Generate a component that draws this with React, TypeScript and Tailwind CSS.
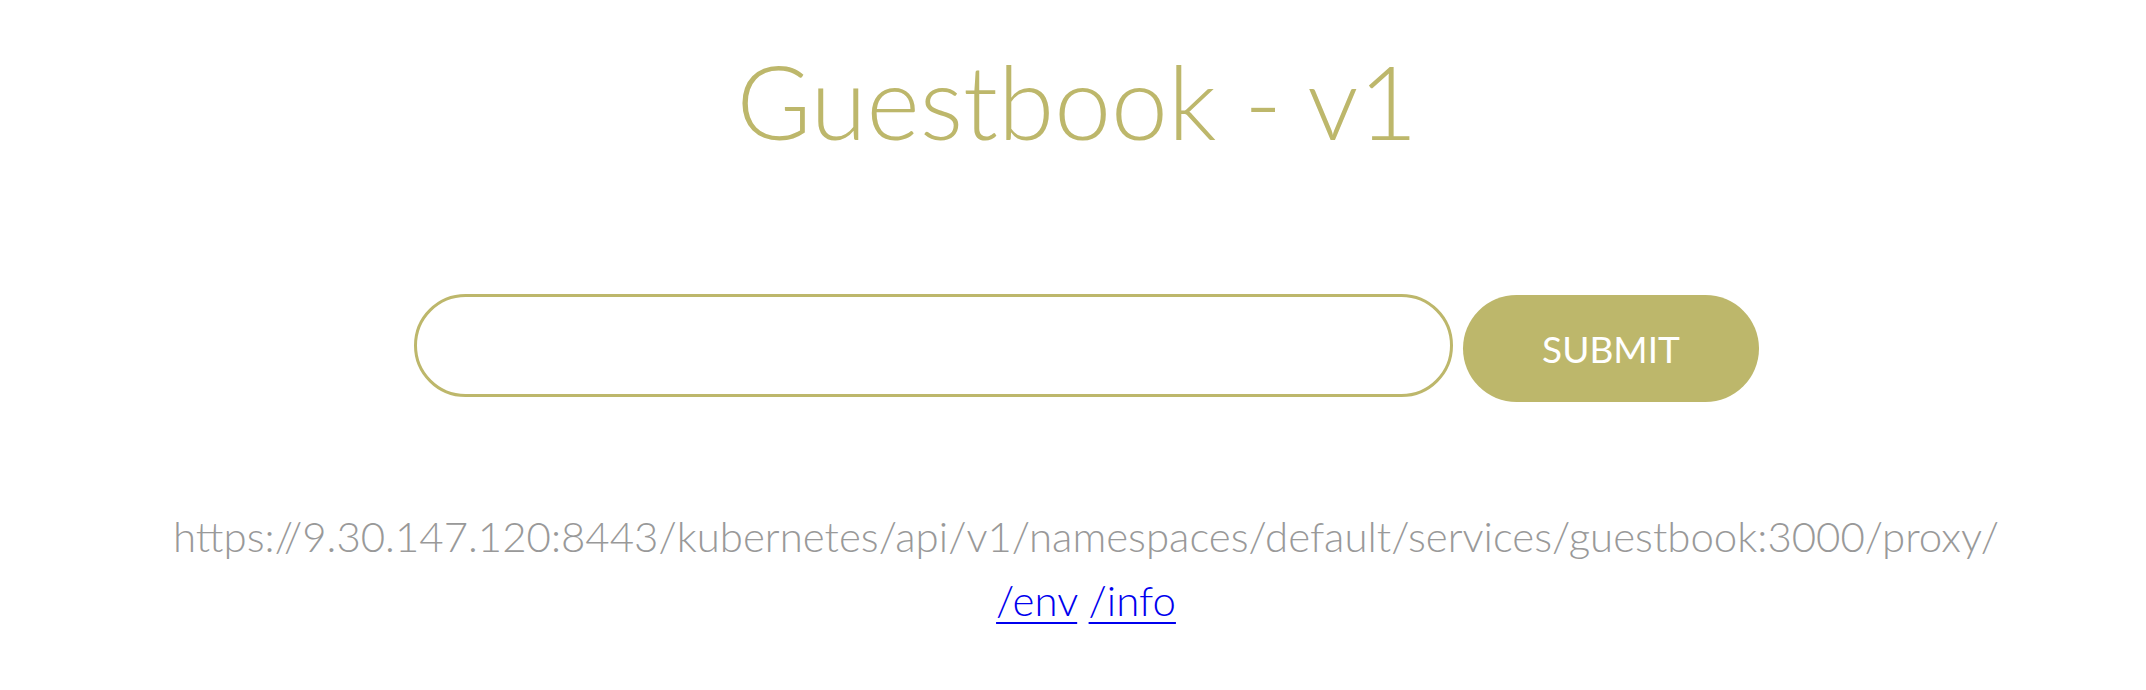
import React from "react";

export default function App() {
  return (
    <div className="min-h-screen bg-white pt-[50px] font-['Lato','Noto_Sans',sans-serif]">
      {/* Title */}
      <h1 className="pl-[8px] text-center text-[102px] leading-none font-light text-[#BDB76B]">
        Guestbook - v1
      </h1>

      {/* Form */}
      <form
        className="mt-[142px] flex items-start justify-center gap-[10px] pl-[27px]"
        onSubmit={(e) => e.preventDefault()}
      >
        <input
          type="text"
          className="w-[1039px] h-[103px] rounded-full border-[3px] border-[#BDB76B] px-[50px] text-[44px] font-light text-[#112233] outline-none"
        />
        <a
          href="#"
          className="mt-[1px] flex h-[107px] w-[296px] items-center justify-center rounded-full bg-[#BDB76B] text-[37px] uppercase text-white no-underline"
        >
          Submit
        </a>
      </form>

      {/* Links */}
      <div className="mt-[102px] pl-[26px] text-center leading-[64px] text-[42px] font-light">
        <p className="whitespace-nowrap text-[#999999]">
          https://9.30.147.120:8443/kubernetes/api/v1/namespaces/default/services/guestbook:3000/proxy/
        </p>
        <p>
          <a href="#" className="text-[#0000EE] underline underline-offset-[6px] decoration-[2px]">/env</a>{" "}
          <a href="#" className="text-[#0000EE] underline underline-offset-[6px] decoration-[2px]">/info</a>
        </p>
      </div>
    </div>
  );
}
